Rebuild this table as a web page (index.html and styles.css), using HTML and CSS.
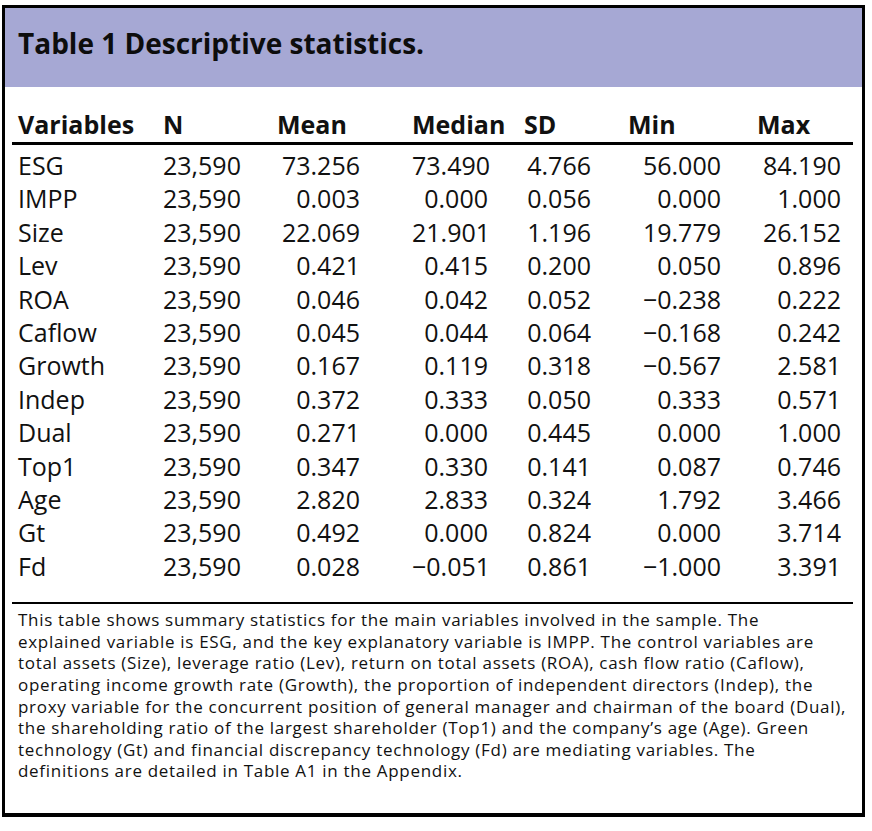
FILE: index.html
```html
<!DOCTYPE html>
<html lang="en">
<head>
<meta charset="utf-8">
<title>Table 1 Descriptive statistics</title>
<link rel="stylesheet" href="styles.css">
</head>
<body>
<div class="frame">
  <div class="head"><h1 class="title">Table 1 Descriptive statistics.</h1></div>
  <div class="wrap">
    <table class="stats">
      <colgroup>
        <col class="c-var"><col class="c-n"><col class="c-mean"><col class="c-median"><col class="c-sd"><col class="c-min"><col class="c-max">
      </colgroup>
      <thead>
        <tr><th>Variables</th><th>N</th><th>Mean</th><th>Median</th><th>SD</th><th>Min</th><th>Max</th></tr>
      </thead>
      <tbody>
        <tr><td>ESG</td><td>23,590</td><td>73.256</td><td>73.490</td><td>4.766</td><td>56.000</td><td>84.190</td></tr>
        <tr><td>IMPP</td><td>23,590</td><td>0.003</td><td>0.000</td><td>0.056</td><td>0.000</td><td>1.000</td></tr>
        <tr><td>Size</td><td>23,590</td><td>22.069</td><td>21.901</td><td>1.196</td><td>19.779</td><td>26.152</td></tr>
        <tr><td>Lev</td><td>23,590</td><td>0.421</td><td>0.415</td><td>0.200</td><td>0.050</td><td>0.896</td></tr>
        <tr><td>ROA</td><td>23,590</td><td>0.046</td><td>0.042</td><td>0.052</td><td>−0.238</td><td>0.222</td></tr>
        <tr><td>Caflow</td><td>23,590</td><td>0.045</td><td>0.044</td><td>0.064</td><td>−0.168</td><td>0.242</td></tr>
        <tr><td>Growth</td><td>23,590</td><td>0.167</td><td>0.119</td><td>0.318</td><td>−0.567</td><td>2.581</td></tr>
        <tr><td>Indep</td><td>23,590</td><td>0.372</td><td>0.333</td><td>0.050</td><td>0.333</td><td>0.571</td></tr>
        <tr><td>Dual</td><td>23,590</td><td>0.271</td><td>0.000</td><td>0.445</td><td>0.000</td><td>1.000</td></tr>
        <tr><td>Top1</td><td>23,590</td><td>0.347</td><td>0.330</td><td>0.141</td><td>0.087</td><td>0.746</td></tr>
        <tr><td>Age</td><td>23,590</td><td>2.820</td><td>2.833</td><td>0.324</td><td>1.792</td><td>3.466</td></tr>
        <tr><td>Gt</td><td>23,590</td><td>0.492</td><td>0.000</td><td>0.824</td><td>0.000</td><td>3.714</td></tr>
        <tr><td>Fd</td><td>23,590</td><td>0.028</td><td>−0.051</td><td>0.861</td><td>−1.000</td><td>3.391</td></tr>
      </tbody>
    </table>
  </div>
  <p class="note">This table shows summary statistics for the main variables involved in the sample. The<br>explained variable is ESG, and the key explanatory variable is IMPP. The control variables are<br>total assets (Size), leverage ratio (Lev), return on total assets (ROA), cash flow ratio (Caflow),<br>operating income growth rate (Growth), the proportion of independent directors (Indep), the<br>proxy variable for the concurrent position of general manager and chairman of the board (Dual),<br>the shareholding ratio of the largest shareholder (Top1) and the company’s age (Age). Green<br>technology (Gt) and financial discrepancy technology (Fd) are mediating variables. The<br>definitions are detailed in Table A1 in the Appendix.</p>
</div>
</body>
</html>
```

FILE: styles.css
```css
html, body {
  margin: 0;
  padding: 0;
  background: #ffffff;
}

body {
  font-family: "Open Sans", "Noto Sans", sans-serif;
  color: #111111;
}

.frame {
  margin: 5px 0 0 2px;
  width: 857px;
  border: 3px solid #000000;
  border-bottom-width: 4px;
}

.head {
  box-sizing: border-box;
  height: 79px;
  padding: 16px 0 0 13px;
  background: #a6a8d4;
}

.title {
  margin: 0;
  font-size: 28px;
  font-weight: 700;
  line-height: 38px;
  color: #0d0d0d;
}

.wrap {
  padding: 19px 9px 0 7px;
}

.stats {
  width: 841px;
  table-layout: fixed;
  border-collapse: separate;
  border-spacing: 0;
  font-size: 25px;
}

.c-var { width: 151px; }
.c-n { width: 114px; }
.c-mean { width: 135px; }
.c-median { width: 112px; }
.c-sd { width: 104px; }
.c-min { width: 129px; }
.c-max { width: 96px; }

.stats th {
  padding: 0;
  height: 36px;
  line-height: 36px;
  text-align: left;
  font-weight: 700;
  border-bottom: 3px solid #000000;
  white-space: nowrap;
}

.stats td {
  padding: 0;
  line-height: 33.4px;
  text-align: right;
  white-space: nowrap;
}

.stats th:first-child,
.stats td:first-child {
  padding-left: 6px;
  text-align: left;
}

.stats td:nth-child(2) { text-align: left; }
.stats td:nth-child(3) { padding-right: 52px; }
.stats td:nth-child(4) { padding-right: 36px; }
.stats td:nth-child(5) { padding-right: 37px; }
.stats td:nth-child(6) { padding-right: 36px; }
.stats td:nth-child(7) { padding-right: 12px; }

.stats tbody tr:first-child td {
  padding-top: 4px;
}

.stats tbody tr:last-child td {
  padding-bottom: 19px;
  border-bottom: 2px solid #000000;
}

.note {
  margin: 0;
  padding: 5px 2px 31px 13px;
  font-size: 17px;
  letter-spacing: 0.7px;
  line-height: 21.6px;
  white-space: nowrap;
}
```
